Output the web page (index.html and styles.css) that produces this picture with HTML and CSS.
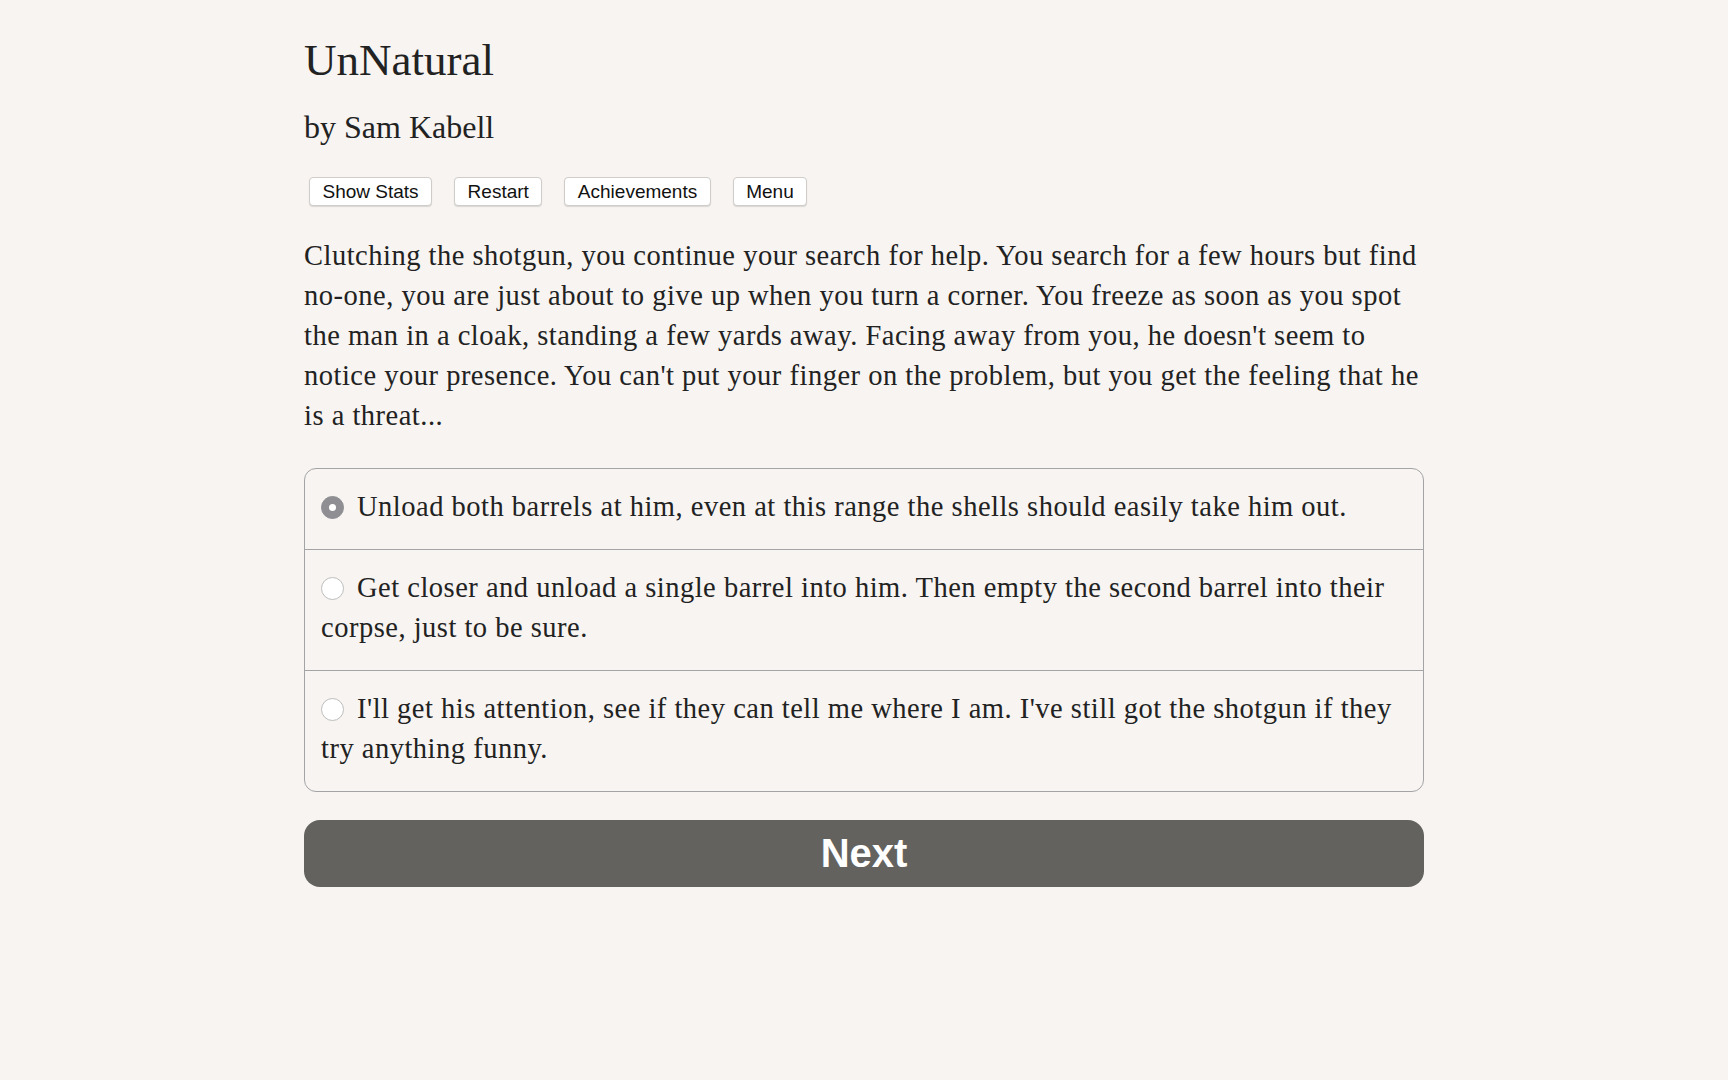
FILE: index.html
```html
<!DOCTYPE html>
<html lang="en">
<head>
  <meta charset="UTF-8">
  <meta name="viewport" content="width=device-width, initial-scale=1.0">
  <title>UnNatural</title>
  <link rel="stylesheet" href="styles.css">
</head>
<body>

  <div class="container">
    <h1 class="title">UnNatural</h1>
    <h2 class="author">by Sam Kabell</h2>

    <!-- Top toolbar -->
    <div class="toolbar">
      <button class="tool-btn">Show Stats</button>
      <button class="tool-btn">Restart</button>
      <button class="tool-btn">Achievements</button>
      <button class="tool-btn">Menu</button>
    </div>

    <p class="story">Clutching the shotgun, you continue your search for help. You search for a few hours but find no-one, you are just about to give up when you turn a corner. You freeze as soon as you spot the man in a cloak, standing a few yards away. Facing away from you, he doesn't seem to notice your presence. You can't put your finger on the problem, but you get the feeling that he is a threat...</p>

    <!-- Choices -->
    <form class="choices">
      <label class="choice">
        <input type="radio" name="choice" value="0" checked>
        <span class="radio"></span>Unload both barrels at him, even at this range the shells should easily take him out.
      </label>
      <label class="choice">
        <input type="radio" name="choice" value="1">
        <span class="radio"></span>Get closer and unload a single barrel into him. Then empty the second barrel into their corpse, just to be sure.
      </label>
      <label class="choice">
        <input type="radio" name="choice" value="2">
        <span class="radio"></span>I'll get his attention, see if they can tell me where I am. I've still got the shotgun if they try anything funny.
      </label>
    </form>

    <button class="next-btn">Next</button>
  </div>

</body>
</html>
```

FILE: styles.css
```css
/* General Styles */
body {
  font-family: 'Liberation Serif', serif;
  margin: 0;
  padding: 0;
  background: #f7f4f1;
  color: #222;
}
.container {
  max-width: 1120px;
  margin: 0 auto;
  padding-top: 36px;
}
.title {
  font-size: 45px;
  font-weight: normal;
  line-height: 48px;
  margin: 0;
}
.author {
  font-size: 32px;
  font-weight: normal;
  line-height: 38px;
  margin: 24px 0 0;
}
.toolbar {
  display: flex;
  gap: 22px;
  margin: 31px 0 0 5px;
}
.tool-btn {
  font-family: 'Liberation Sans', sans-serif;
  font-size: 19px;
  color: #111;
  background: #fff;
  border: 1px solid #cfccc9;
  border-radius: 4px;
  box-shadow: 0 1px 1px rgba(0, 0, 0, 0.12);
  height: 29px;
  padding: 0 12.5px;
  cursor: pointer;
}
.story {
  font-size: 28.5px;
  line-height: 40px;
  letter-spacing: 0.5px;
  margin: 30px 0 0;
}
.choices {
  margin: 32px 0 0;
  border: 1px solid #a4a4a6;
  border-radius: 12px;
  overflow: hidden;
}
.choice {
  display: block;
  font-size: 28.5px;
  line-height: 40px;
  letter-spacing: 0.5px;
  padding: 18px 16px 22px;
  cursor: pointer;
}
.choice + .choice {
  border-top: 1px solid #a4a4a6;
}
.choice input {
  display: none;
}
/* Radio dot drawn by hand */
.radio {
  display: inline-block;
  box-sizing: border-box;
  width: 23px;
  height: 23px;
  margin: 0 13px -3px 0;
  border-radius: 50%;
  background: #fff;
  border: 1px solid #bdbdbd;
  position: relative;
}
.choice input:checked + .radio {
  background: #8e8e93;
  border-color: #8e8e93;
}
.choice input:checked + .radio::after {
  content: '';
  position: absolute;
  left: 50%;
  top: 50%;
  width: 7px;
  height: 7px;
  margin: -3.5px 0 0 -3.5px;
  border-radius: 50%;
  background: #fff;
}
.next-btn {
  display: block;
  width: 100%;
  height: 67px;
  margin-top: 28px;
  font-family: 'Liberation Sans', sans-serif;
  font-size: 40px;
  font-weight: bold;
  color: #fff;
  background: #63625f;
  border: none;
  border-radius: 16px;
  cursor: pointer;
}
```
